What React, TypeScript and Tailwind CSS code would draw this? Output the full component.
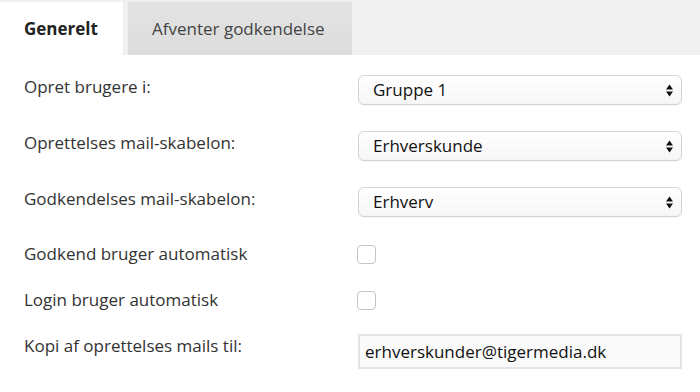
import React from "react";

function Arrows() {
  return (
    <svg width="7" height="13" viewBox="0 0 7 13" className="shrink-0">
      <path d="M3.5 0.5 L7 5.5 L0 5.5 Z" fill="#111" />
      <path d="M3.5 12.5 L7 7.5 L0 7.5 Z" fill="#111" />
    </svg>
  );
}

function Select({ value }: { value: string }) {
  return (
    <div className="flex h-[30px] w-[324px] items-center justify-between rounded-[6px] border border-[#d4d4d4] bg-gradient-to-b from-white to-[#f6f6f6] pl-[14px] pr-[8px] text-[17px] text-[#111] shadow-[0_1px_1px_rgba(0,0,0,0.04)]">
      <span>{value}</span>
      <Arrows />
    </div>
  );
}

function Checkbox() {
  return <div className="ml-[-1px] h-[19px] w-[19px] rounded-[4px] border border-[#c4c4c4] bg-white" />;
}

export default function App() {
  return (
    <div
      className="h-[392px] w-[700px] overflow-hidden bg-white text-[#333]"
      style={{ fontFamily: '"Open Sans", sans-serif' }}
    >
      <div className="flex h-[55px] items-end bg-[#f0f0f0]">
        <div className="flex h-[53px] w-[123px] items-center bg-white pl-[24px] text-[17px] font-bold text-[#222]">
          Generelt
        </div>
        <div className="ml-[5px] flex h-[53px] w-[224px] items-center bg-gradient-to-b from-[#e3e3e3] to-[#dcdcdc] pl-[24px] text-[17px] text-[#444]">
          Afventer godkendelse
        </div>
      </div>

      <div className="pl-[24px] text-[17px] leading-[24px]">
        <div className="mt-[20px] flex items-start">
          <div className="w-[334px]">Opret brugere i:</div>
          <Select value="Gruppe 1" />
        </div>
        <div className="mt-[26px] flex items-start">
          <div className="w-[334px]">Oprettelses mail-skabelon:</div>
          <Select value="Erhverskunde" />
        </div>
        <div className="mt-[26px] flex items-start">
          <div className="w-[334px]">Godkendelses mail-skabelon:</div>
          <Select value="Erhverv" />
        </div>
        <div className="mt-[25px] flex h-[24px] items-center">
          <div className="w-[334px]">Godkend bruger automatisk</div>
          <Checkbox />
        </div>
        <div className="mt-[22px] flex h-[24px] items-center">
          <div className="w-[334px]">Login bruger automatisk</div>
          <Checkbox />
        </div>
        <div className="mt-[22px] flex items-start">
          <div className="w-[334px]">Kopi af oprettelses mails til:</div>
          <div className="flex h-[35px] w-[324px] items-center border-2 border-[#e4e4e4] bg-[#fafafa] pl-[5px] text-[17px] text-[#111]">
            erhverskunder@tigermedia.dk
          </div>
        </div>
      </div>
    </div>
  );
}
